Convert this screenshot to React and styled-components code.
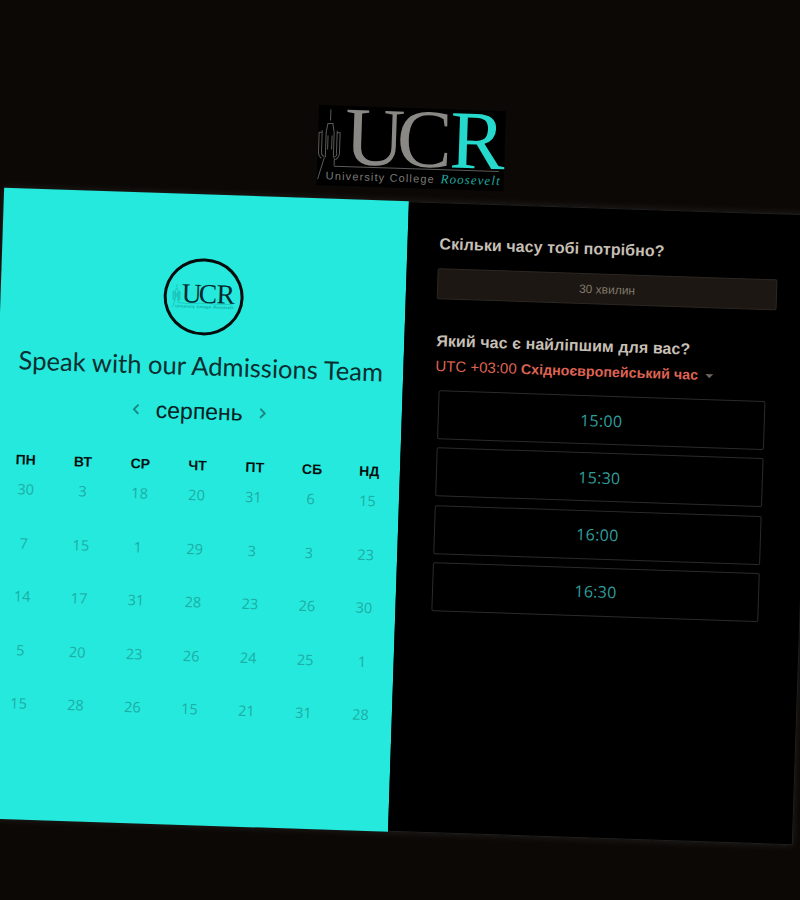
import styled, { createGlobalStyle } from "styled-components"
import { ChevronLeft, ChevronRight } from "lucide-react"

const weekDays = ["ПН", "ВТ", "СР", "ЧТ", "ПТ", "СБ", "НД"]
const dates = [
    30, 3, 18, 20, 31, 6, 15,
    7, 15, 1, 29, 3, 3, 23,
    14, 17, 31, 28, 23, 26, 30,
    5, 20, 23, 26, 24, 25, 1,
    15, 28, 26, 15, 21, 31, 28,
]
const slots = ["15:00", "15:30", "16:00", "16:30"]

const GlobalStyle = createGlobalStyle`
    html, body {
        margin: 0;
        padding: 0;
        height: 900px;
        overflow: hidden;
        background: #0c0806;
    }
    #root {
        height: 900px;
        overflow: hidden;
    }
`

const Scene = styled.div`
    width: 800px;
    height: 900px;
    padding-top: 108px;
    box-sizing: border-box;
    display: flex;
    justify-content: center;
    font-family: "Liberation Sans", Arial, sans-serif;
`

const Tilted = styled.main`
    flex: 0 0 810px;
    height: 724px;
    display: flex;
    flex-direction: column;
    align-items: center;
    gap: 13px;
    transform: rotate(1.9deg);
`

const Card = styled.section`
    width: 810px;
    height: 631px;
    display: grid;
    grid-template-columns: 405px 405px;
    box-shadow: 0 0 8px rgba(255, 255, 255, 0.1);
`

const CalendarPanel = styled.div`
    background: #25e9dc;
    padding-top: 64px;
    display: flex;
    flex-direction: column;
    align-items: center;
`

const Badge = styled.div`
    width: 80px;
    height: 77px;
    box-sizing: border-box;
    border: 3.5px solid #050a0a;
    border-radius: 50%;
    display: flex;
    align-items: center;
    justify-content: center;
`

const Title = styled.h1`
    margin: 15px 0 0;
    font-family: Lato, sans-serif;
    font-size: 25.6px;
    line-height: 30px;
    font-weight: 400;
    color: #0a2f31;
    white-space: nowrap;
`

const MonthRow = styled.div`
    margin-top: 19px;
    display: flex;
    align-items: center;
    gap: 12px;
    color: #1a8a86;
`

const Month = styled.span`
    font-size: 23px;
    line-height: 24px;
    color: #04201f;
`

const Grid = styled.div`
    width: ${(p) => p.$width}px;
    margin-top: ${(p) => p.$top}px;
    display: grid;
    grid-template-columns: repeat(7, 1fr);
    row-gap: ${(p) => p.$gap}px;
`

const WeekDay = styled.div`
    font-size: 14px;
    line-height: 16px;
    font-weight: 700;
    text-align: center;
    color: #04100f;
`

const DateCell = styled.div`
    font-family: "Open Sans", sans-serif;
    font-size: 14.5px;
    line-height: 20px;
    text-align: center;
    color: #1cada5;
`

const TimePanel = styled.div`
    background: #000;
    padding: 31px 0 0 32px;
    border: 1px solid rgba(255, 255, 255, 0.12);
    border-left: 0;
    box-sizing: border-box;
`

const Question = styled.h2`
    margin: ${(p) => p.$top}px 0 0;
    font-size: 16px;
    line-height: 20px;
    font-weight: 700;
    letter-spacing: 0.08px;
    color: #c6bfb5;
    white-space: nowrap;
`

const Duration = styled.div`
    width: 340px;
    height: 31px;
    margin: 14px 0 0 -1px;
    box-sizing: border-box;
    background: #1c1712;
    border: 1px solid #2c2722;
    border-radius: 2px;
    display: flex;
    align-items: center;
    justify-content: center;
    font-size: 12px;
    color: #80776b;
`

const Zone = styled.div`
    margin-top: 5px;
    font-size: 15px;
    line-height: 20px;
    color: #df6353;
    display: flex;
    align-items: center;
    white-space: pre;
`

const ZoneName = styled.b`
    font-size: 14.25px;
    font-weight: 700;
`

const Caret = styled.i`
    margin: 2px 0 0 7px;
    border-left: 4px solid transparent;
    border-right: 4px solid transparent;
    border-top: 4px solid #6b635b;
`

const Slots = styled.div`
    width: 327px;
    margin: 14px 0 0 4px;
    display: flex;
    flex-direction: column;
    gap: 8.3px;
`

const Slot = styled.button`
    height: 49px;
    padding: 0;
    background: #000;
    border: 1px solid #2b2b2a;
    border-radius: 2px;
    font-family: "Open Sans", sans-serif;
    font-size: 16px;
    letter-spacing: 0.3px;
    color: #2f9f9c;
`

const Mark = styled.svg`
    flex: none;
    overflow: visible;
`

// the wordmark, used big on black above the card and small inside the badge
const Logo = ({ width, height, main, accent, script, sub, tower, back }) => (
    <Mark width={width} height={height} viewBox="0 0 187 80">
        {back && <rect width="187" height="80" fill={back} />}
        <path
            d="M12 4V15M8 27L9.5 18H14.5L16 27M8 27V52M16 27V52M10 30V44M14 30V44M4 25V46Q4 51 7 51M1 27H4M1 27V47Q1 51 4 53M19 25V46Q20 51 17 51M19 27H22V47Q22 52 18 54M7 52L1 74M17 52V60"
            fill="none"
            stroke={tower}
            strokeWidth="1"
        />
        <rect x="17" y="60" width="165" height="1" fill={tower} />
        <text fontFamily="Liberation Serif" fontSize="83" y="58">
            <tspan x="27" fill={main}>U</tspan>
            <tspan x="79" fill={main}>C</tspan>
            <tspan x="132" fill={accent}>R</tspan>
        </text>
        <text x="9" y="74" fontFamily="Liberation Sans" fontSize="11" fill={sub} textLength="108">
            University College
        </text>
        <text x="124" y="74" fontFamily="Liberation Serif" fontSize="13" fontStyle="italic" fill={script} textLength="59">
            Roosevelt
        </text>
    </Mark>
)

const App = () => {
    return (
        <Scene>
            <GlobalStyle />
            <Tilted>
                <Logo width={187} height={80} back="#000" main="#8a8884" accent="#25d9cc" script="#1fa89e" sub="#7b7a76" tower="#5c5b58" />
                <Card>
                    <CalendarPanel>
                        <Badge>
                            <Logo width={62} height={27} main="#04282c" accent="#04282c" script="#127f7c" sub="#127f7c" tower="#127f7c" />
                        </Badge>
                        <Title>Speak with our Admissions Team</Title>
                        <MonthRow>
                            <ChevronLeft size={16} strokeWidth={3} />
                            <Month>серпень</Month>
                            <ChevronRight size={16} strokeWidth={3} />
                        </MonthRow>
                        <Grid $width={401} $top={34} $gap={0}>
                            {weekDays.map((day) => (
                                <WeekDay key={day}>{day}</WeekDay>
                            ))}
                        </Grid>
                        <Grid $width={399} $top={12} $gap={33.5}>
                            {dates.map((date, i) => (
                                <DateCell key={i}>{date}</DateCell>
                            ))}
                        </Grid>
                    </CalendarPanel>
                    <TimePanel>
                        <Question $top={0}>Скільки часу тобі потрібно?</Question>
                        <Duration>30 хвилин</Duration>
                        <Question $top={32}>Який час є найліпшим для вас?</Question>
                        <Zone>
                            UTC +03:00 <ZoneName>Східноєвропейський час</ZoneName>
                            <Caret />
                        </Zone>
                        <Slots>
                            {slots.map((slot) => (
                                <Slot key={slot}>{slot}</Slot>
                            ))}
                        </Slots>
                    </TimePanel>
                </Card>
            </Tilted>
        </Scene>
    )
}

export default App
